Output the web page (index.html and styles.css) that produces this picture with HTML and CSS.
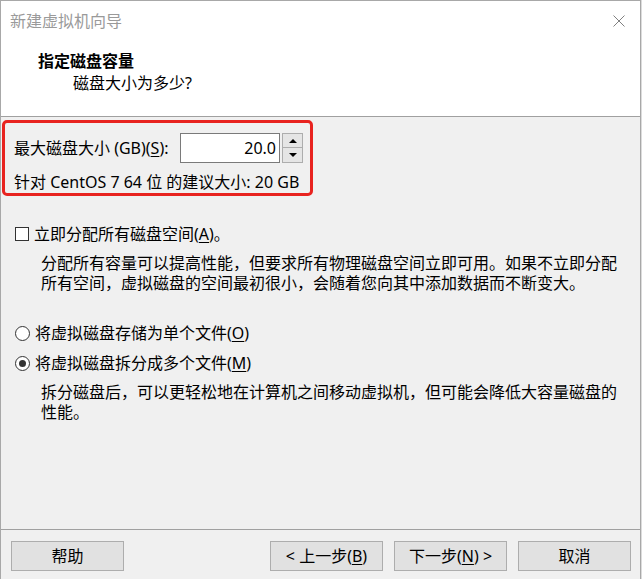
FILE: index.html
```html
<!DOCTYPE html>
<html lang="zh-CN">
<head>
<meta charset="utf-8">
<title>新建虚拟机向导</title>
<link rel="stylesheet" href="styles.css">
</head>
<body>
<div class="window">
  <div class="top">
    <div class="titlebar">
      <span class="title">新建虚拟机向导</span>
      <svg class="close" width="12" height="12" viewBox="0 0 12 12"><path d="M0.5 0.5 L11.5 11.5 M11.5 0.5 L0.5 11.5" stroke="#808080" stroke-width="1" fill="none"/></svg>
    </div>
    <div class="heading">
      <div class="h-title">指定磁盘容量</div>
      <div class="h-sub">磁盘大小为多少?</div>
    </div>
  </div>
  <div class="main">
    <div class="highlight">
      <div class="size-row">
        <span class="size-label">最大磁盘大小 (GB)(<u>S</u>):</span>
        <div class="spin">
          <div class="spin-input">20.0</div>
          <div class="spin-btns">
            <span class="spin-btn"><span class="tri-up"></span></span>
            <span class="spin-btn"><span class="tri-down"></span></span>
          </div>
        </div>
      </div>
      <div class="hint">针对 CentOS 7 64 位 的建议大小: 20 GB</div>
    </div>

    <div class="option opt-check">
      <span class="checkbox"></span>
      <span>立即分配所有磁盘空间(<u>A</u>)。</span>
    </div>
    <div class="desc">分配所有容量可以提高性能，但要求所有物理磁盘空间立即可用。如果不立即分配所有空间，虚拟磁盘的空间最初很小，会随着您向其中添加数据而不断变大。</div>

    <div class="option opt-radio1">
      <span class="radio"></span>
      <span>将虚拟磁盘存储为单个文件(<u>O</u>)</span>
    </div>
    <div class="option opt-radio2">
      <span class="radio checked"></span>
      <span>将虚拟磁盘拆分成多个文件(<u>M</u>)</span>
    </div>
    <div class="desc">拆分磁盘后，可以更轻松地在计算机之间移动虚拟机，但可能会降低大容量磁盘的性能。</div>
  </div>
  <div class="footer">
    <button class="btn">帮助</button>
    <div class="spacer"></div>
    <button class="btn">&lt; 上一步(<u>B</u>)</button>
    <button class="btn">下一步(<u>N</u>) &gt;</button>
    <button class="btn">取消</button>
  </div>
</div>
</body>
</html>
```
FILE: styles.css
```css
html, body {
  margin: 0;
  padding: 0;
}
body {
  width: 642px;
  height: 579px;
  background: #dcdcdc;
  font-family: "Noto Sans", "Noto Sans CJK SC", sans-serif;
  font-size: 16px;
  color: #000;
  overflow: hidden;
}
.window {
  width: 641px;
  height: 579px;
  box-sizing: border-box;
  border: 1px solid #a8a8a8;
  border-bottom: none;
  background: #f0f0f0;
  display: flex;
  flex-direction: column;
}
.top {
  height: 116px;
  box-sizing: border-box;
  background: #fff;
  border-bottom: 1px solid #a0a0a0;
}
.titlebar {
  display: flex;
  justify-content: space-between;
  align-items: center;
  padding: 10px 15px 0 9px;
  height: 20px;
}
.title {
  color: #9a9a9a;
  line-height: 20px;
}
.close {
  display: block;
}
.heading {
  margin-top: 20px;
  padding-left: 37px;
}
.h-title {
  font-weight: bold;
  line-height: 20px;
}
.h-sub {
  margin-top: 2px;
  padding-left: 35px;
  line-height: 20px;
}
.main {
  flex: 1;
}
.highlight {
  margin: 3px 0 0 1px;
  width: 311px;
  height: 76px;
  box-sizing: border-box;
  border: 3px solid #e8231f;
  border-radius: 5px;
  padding: 10px 7px 0 9px;
}
.size-row {
  display: flex;
  align-items: center;
  height: 30px;
}
.size-label {
  line-height: 20px;
  width: 166px;
  flex: none;
}
.spin {
  display: flex;
}
.spin-input {
  width: 100px;
  height: 30px;
  box-sizing: border-box;
  border: 1px solid #7a7a7a;
  background: #fff;
  text-align: right;
  padding-right: 3px;
  line-height: 28px;
}
.spin-btns {
  display: flex;
  flex-direction: column;
  margin-left: 2px;
  width: 21px;
}
.spin-btn {
  height: 15px;
  box-sizing: border-box;
  border: 1px solid #adadad;
  background: #e5e5e5;
  display: flex;
  align-items: center;
  justify-content: center;
}
.spin-btn + .spin-btn {
  border-top: none;
}
.tri-up {
  width: 0;
  height: 0;
  border-left: 4px solid transparent;
  border-right: 4px solid transparent;
  border-bottom: 4px solid #000;
}
.tri-down {
  width: 0;
  height: 0;
  border-left: 4px solid transparent;
  border-right: 4px solid transparent;
  border-top: 4px solid #000;
}
.hint {
  margin-top: 9px;
  line-height: 20px;
  white-space: nowrap;
}
.option {
  display: flex;
  align-items: center;
  margin-left: 14px;
  line-height: 20px;
}
.opt-check {
  margin-top: 28px;
}
.opt-radio1 {
  margin-top: 30px;
}
.opt-radio2 {
  margin-top: 10px;
}
.checkbox {
  width: 14px;
  height: 14px;
  box-sizing: border-box;
  border: 1px solid #333;
  background: #fff;
  margin-right: 5px;
}
.radio {
  width: 15px;
  height: 15px;
  box-sizing: border-box;
  border: 1px solid #333;
  border-radius: 50%;
  background: #fff;
  margin-right: 5px;
  display: flex;
  align-items: center;
  justify-content: center;
}
.radio.checked::after {
  content: "";
  width: 7px;
  height: 7px;
  border-radius: 50%;
  background: #333;
}
.desc {
  margin-top: 9px;
  padding-left: 40px;
  width: 585px;
  line-height: 20px;
}
u {
  text-decoration: underline;
  text-underline-offset: 2px;
}
.footer {
  height: 50px;
  box-sizing: border-box;
  border-top: 1px solid #a0a0a0;
  display: flex;
  align-items: flex-start;
  padding: 11px 9px 0 10px;
  gap: 11px;
}
.spacer {
  flex: 1;
}
.btn {
  width: 113px;
  height: 30px;
  box-sizing: border-box;
  border: 1px solid #adadad;
  background: #e1e1e1;
  font-family: inherit;
  font-size: 16px;
  color: #000;
  padding: 0;
  line-height: 28px;
}
```
